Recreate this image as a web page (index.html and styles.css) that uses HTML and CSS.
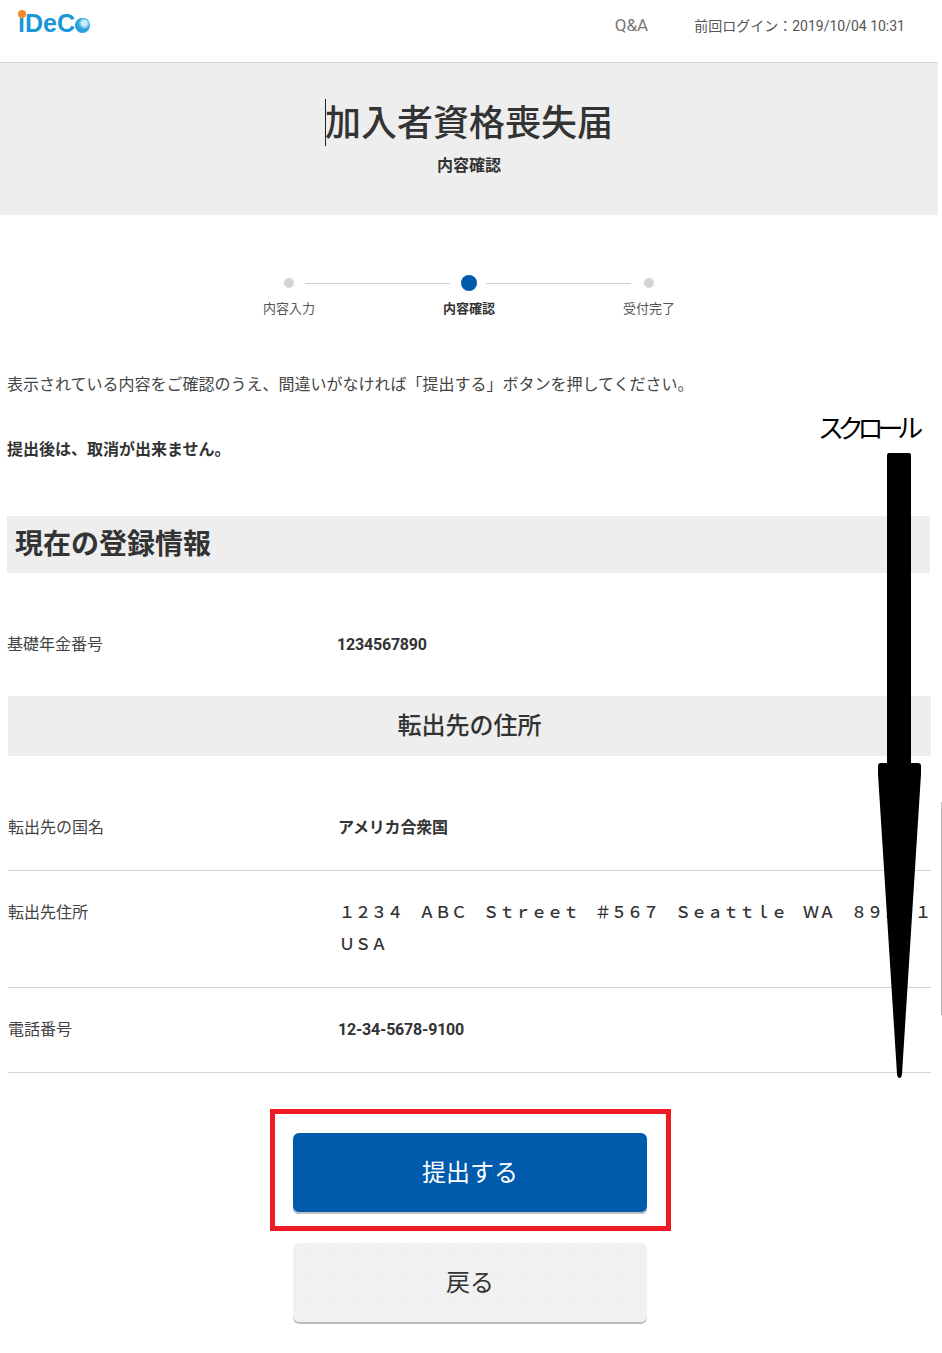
FILE: index.html
```html
<!DOCTYPE html>
<html lang="ja">
<head>
<meta charset="utf-8">
<title>加入者資格喪失届</title>
<link rel="stylesheet" href="styles.css">
</head>
<body>
<div class="page">
  <header class="topbar">
    <div class="logo">iDeCo<span class="logo-dot"></span><span class="logo-ball"></span></div>
    <nav class="topnav">
      <span class="qa">Q&amp;A</span>
      <span class="login">前回ログイン：2019/10/04 10:31</span>
    </nav>
  </header>
  <section class="hero">
    <h1 class="hero-title"><span class="caret"></span>加入者資格喪失届</h1>
    <p class="hero-sub">内容確認</p>
  </section>
  <ol class="steps">
    <li class="step"><span class="dot"></span><span class="step-label">内容入力</span></li>
    <li class="step step-current"><span class="dot"></span><span class="step-label">内容確認</span></li>
    <li class="step"><span class="dot"></span><span class="step-label">受付完了</span></li>
  </ol>
  <p class="lead">表示されている内容をご確認のうえ、間違いがなければ「提出する」ボタンを押してください。</p>
  <p class="warn">提出後は、取消が出来ません。</p>
  <h2 class="section-title">現在の登録情報</h2>
  <div class="basic-row"><span class="label">基礎年金番号</span><span class="value">1234567890</span></div>
  <h3 class="sub-title">転出先の住所</h3>
  <div class="rows">
    <div class="row row-country"><span class="label">転出先の国名</span><span class="value">アメリカ合衆国</span></div>
    <div class="row row-address"><span class="label">転出先住所</span><span class="value value-address">１２３４　ＡＢＣ　Ｓｔｒｅｅｔ　＃５６７　Ｓｅａｔｔｌｅ　ＷＡ　８９１０１<br>ＵＳＡ</span></div>
    <div class="row row-phone"><span class="label">電話番号</span><span class="value">12-34-5678-9100</span></div>
  </div>
  <div class="actions">
    <div class="highlight"><button class="btn btn-primary" type="button">提出する</button></div>
    <button class="btn btn-back" type="button">戻る</button>
  </div>
</div>
<div class="scroll-note">スクロール</div>
<svg class="scroll-arrow" width="45" height="628" viewBox="0 0 45 628" aria-hidden="true">
  <path d="M10 3 Q10 1 12 1 L32 1 Q34 1 34 3 L34 311 L41 311 Q44 311 44 314 L44 322 L25 622 Q24.500 626 22.500 626 Q20.500 626 20 622 L1 322 L1 314 Q1 311 4 311 L10 311 Z" fill="#000"/>
</svg>
<div class="edge-line"></div>
</body>
</html>
```
FILE: styles.css
```css
* { box-sizing: border-box; }
html, body { margin: 0; padding: 0; background: #fff; }
body {
  position: relative;
  width: 942px;
  height: 1353px;
  overflow: hidden;
  font-family: Roboto, "Noto Sans CJK JP", "Liberation Sans", sans-serif;
  color: #333;
  font-size: 16px;
}
.page { width: 938px; }

.topbar {
  height: 63px;
  border-bottom: 1px solid #d4d4d4;
  display: flex;
  justify-content: space-between;
  align-items: flex-start;
  padding: 0 33px 0 18px;
}
.logo {
  position: relative;
  margin-top: 7px;
  font-family: "Liberation Sans", sans-serif;
  font-weight: 700;
  font-size: 25px;
  line-height: 32px;
  color: #1b96d6;
}
.logo-dot {
  position: absolute;
  left: 0;
  top: 3px;
  width: 8px;
  height: 8px;
  border-radius: 50%;
  background: #f08a2c;
}
.logo-ball {
  position: absolute;
  left: 57px;
  top: 11px;
  width: 15px;
  height: 15px;
  border-radius: 50%;
  background: radial-gradient(circle at 62% 35%, #cfeeff 0 18%, #2ba6e0 45%, #1b8fd0 100%);
}
.topnav {
  display: flex;
  gap: 46px;
  align-items: center;
  height: 50px;
  color: #666;
}
.qa { font-size: 17px; color: #777; }
.login { font-size: 14px; color: #555; }

.hero {
  height: 152px;
  background: #eee;
  text-align: center;
  overflow: hidden;
}
.hero-title {
  position: relative;
  display: inline-block;
  margin: 32px 0 0;
  font-size: 36px;
  line-height: 58px;
  font-weight: 500;
  color: #333;
}
.caret {
  position: absolute;
  left: 0;
  top: 4px;
  width: 1px;
  height: 47px;
  background: #222;
}
.hero-sub {
  margin: 1px 0 0;
  font-size: 16px;
  line-height: 24px;
  font-weight: 700;
}

.steps {
  list-style: none;
  display: flex;
  justify-content: center;
  margin: 58px 0 0;
  padding: 0;
}
.step {
  position: relative;
  width: 180px;
  height: 50px;
  display: flex;
  flex-direction: column;
  align-items: center;
}
.step .dot {
  width: 10px;
  height: 10px;
  margin-top: 5px;
  border-radius: 50%;
  background: #d4d4d4;
}
.step-current .dot {
  width: 16px;
  height: 16px;
  margin-top: 2px;
  background: #005bac;
}
.step-current::before,
.step-current::after {
  content: "";
  position: absolute;
  top: 10px;
  width: 145px;
  height: 1px;
  background: #d0d0d0;
}
.step-current::before { right: 109px; }
.step-current::after { left: 107px; }
.step-label {
  position: absolute;
  top: 26px;
  font-size: 13px;
  line-height: 20px;
  color: #555;
}
.step-current .step-label { font-weight: 700; color: #333; }

.lead {
  margin: 50px 0 0 7px;
  line-height: 24px;
  white-space: nowrap;
  color: #444;
}
.warn {
  margin: 41px 0 0 7px;
  line-height: 24px;
  font-weight: 700;
}

.section-title {
  margin: 54px 0 0 7px;
  width: 923px;
  height: 57px;
  padding-left: 8px;
  background: #eee;
  font-size: 28px;
  line-height: 57px;
  font-weight: 700;
}
.basic-row {
  display: flex;
  margin: 60px 0 0 7px;
  line-height: 24px;
}
.basic-row .label { width: 330px; }
.label { color: #444; flex: none; }
.value { font-weight: 700; letter-spacing: -0.2px; }

.sub-title {
  margin: 39px 0 0 8px;
  width: 923px;
  height: 60px;
  background: #eee;
  text-align: center;
  font-size: 24px;
  line-height: 60px;
  font-weight: 500;
}
.rows { margin-left: 8px; width: 923px; }
.row {
  display: flex;
  border-bottom: 1px solid #d4d4d4;
  line-height: 32px;
}
.row .label { width: 330px; }
.row-country { height: 115px; padding-top: 56px; }
.row-address { height: 117px; padding-top: 26px; }
.row-phone { height: 85px; padding-top: 26px; }
.value-address {
  margin-top: -2px;
  padding-left: 1px;
  white-space: nowrap;
  width: 593px;
  height: 66px;
  overflow: hidden;
  letter-spacing: 0;
  font-family: "Noto Sans CJK SC", sans-serif;
  font-weight: 500;
}

.actions {
  display: flex;
  flex-direction: column;
  align-items: center;
  margin-top: 36px;
  width: 940px;
}
.highlight {
  width: 401px;
  height: 122px;
  border: 5px solid #ed1c24;
  display: flex;
  justify-content: center;
  padding-top: 19px;
}
.btn {
  display: block;
  width: 354px;
  height: 81px;
  border: 0;
  border-radius: 6px;
  font-family: inherit;
  font-size: 24px;
}
.btn-primary {
  background: #005bac;
  color: #fff;
  padding: 0 0 6px;
  box-shadow: inset 0 -2px 0 #c0c0c0;
}
.btn-back {
  margin-top: 12px;
  background: #f0f0f0 radial-gradient(#f7f7f7 0.6px, transparent 0.8px) 0 0 / 3px 3px;
  color: #333;
  padding: 0 0 6px;
  box-shadow: inset 0 -2px 0 #bdbdbd;
}

.scroll-note {
  position: absolute;
  left: 818px;
  top: 409px;
  font-size: 26px;
  line-height: 40px;
  letter-spacing: -6.2px;
  color: #000;
  white-space: nowrap;
}
.scroll-arrow {
  position: absolute;
  left: 877px;
  top: 452px;
}
.edge-line {
  position: absolute;
  left: 941px;
  top: 802px;
  width: 1px;
  height: 213px;
  background: #bbb;
}
```
